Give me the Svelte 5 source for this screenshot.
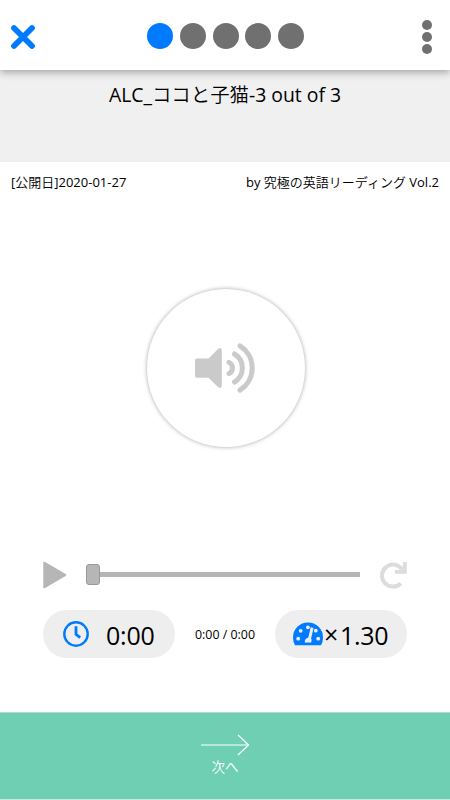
<script lang="ts">
  let steps = 5;
  let current = 0;
  let title = 'ALC_ココと子猫-3 out of 3';
  let published = '2020-01-27';
  let author = '究極の英語リーディング Vol.2';
  let elapsed = '0:00';
  let total = '0:00';
  let rate = '1.30';
</script>

<div class="screen">
  <header class="topbar">
    <button class="close" aria-label="close">
      <svg width="26" height="26" viewBox="0 0 26 26">
        <path d="M4 4 L22 22 M22 4 L4 22" stroke="#007bff" stroke-width="5.8" stroke-linecap="round" />
      </svg>
    </button>
    <div class="steps">
      {#each Array(steps) as _, i}
        <span class="step" class:active={i === current}></span>
      {/each}
    </div>
    <button class="menu" aria-label="menu">
      <span></span><span></span><span></span>
    </button>
  </header>

  <div class="title-band">
    <h1>{title}</h1>
  </div>

  <div class="meta">
    <span class="date">[公開日]{published}</span>
    <span class="author">by {author}</span>
  </div>

  <main>
    <button class="speaker" aria-label="play sound">
      <svg width="60" height="50" viewBox="0 0 60 50">
        <path d="M2 15.5 H13.5 L23 6 Q26.8 3.5 26.8 7.5 V42.5 Q26.8 46.5 23 44 L13.5 34.8 H2 Q0 34.8 0 32.8 V17.5 Q0 15.5 2 15.5 Z" fill="#cacaca" />
        <g fill="none" stroke="#cacaca" stroke-width="5" stroke-linecap="round">
          <path d="M34 19.4 A6.3 6.3 0 0 1 34 30.6" />
          <path d="M39.5 11 A16.4 16.4 0 0 1 39.5 39" />
          <path d="M45 2.8 A26.3 26.3 0 0 1 45 47.2" />
        </g>
      </svg>
    </button>
  </main>

  <div class="player">
    <svg class="play" width="24" height="28" viewBox="0 0 24 28">
      <path d="M1.5 2 L22 14 L1.5 26 Z" fill="#b6b6b6" stroke="#b6b6b6" stroke-width="2.5" stroke-linejoin="round" />
    </svg>
    <div class="slider">
      <span class="thumb"></span>
      <span class="track"></span>
    </div>
    <svg class="repeat" width="28" height="28" viewBox="0 0 28 28">
      <path d="M22.2 8.6 A11 11 0 1 0 20.8 22.3" fill="none" stroke="#dcdcdc" stroke-width="4" />
      <path d="M15 12.8 V9 H22.9 V1 H26.8 V12.8 Z" fill="#dcdcdc" />
    </svg>
  </div>

  <div class="controls">
    <div class="pill timer">
      <svg width="28" height="28" viewBox="0 0 28 28" fill="none" stroke="#007bff">
        <circle cx="14" cy="14" r="11.7" stroke-width="2.4" />
        <path d="M14 6.2 V14.3 L18.2 17.7" stroke-width="2.8" />
      </svg>
      <span class="value">{elapsed}</span>
    </div>
    <span class="progress">{elapsed} / {total}</span>
    <div class="pill speed">
      <svg width="30" height="24" viewBox="0 0 30 24">
        <path d="M2 23.3 Q0 20 0 15.4 A15 15 0 0 1 30 15.4 Q30 20 28 23.3 Z" fill="#007bff" />
        <g fill="#eee">
          <circle cx="5.2" cy="16.7" r="1.9" />
          <circle cx="7.7" cy="8.8" r="1.9" />
          <circle cx="14.9" cy="5.3" r="1.9" />
          <circle cx="22.8" cy="8.7" r="1.9" />
          <circle cx="25.2" cy="16.7" r="1.9" />
          <path d="M17.7 5.2 L20.6 6 L18.1 16.2 Q19.3 18.2 18.2 20.5 H11.8 Q11.5 16.4 15.3 15.4 Z" />
        </g>
      </svg>
      <span class="times">×</span><span class="value rate">{rate}</span>
    </div>
  </div>

  <button class="next">
    <svg width="50" height="22" viewBox="0 0 50 22" fill="none" stroke="#fff" stroke-width="1.2">
      <path d="M1 11 H48.5 M38 1 L48.5 11 L38 21" />
    </svg>
    <span>次へ</span>
  </button>
</div>

<style>
:global(body) {
  margin: 0;
  background: #fff;
}
.screen {
  display: flex;
  flex-direction: column;
  width: 450px;
  height: 800px;
  overflow: hidden;
  font-family: "Open Sans", "Noto Sans CJK JP DemiLight", "Noto Sans CJK JP", sans-serif;
  color: #000;
}
.screen * {
  box-sizing: border-box;
}
svg {
  display: block;
  flex: none;
}
button {
  padding: 0;
  border: 0;
  background: none;
  font: inherit;
}
.topbar {
  display: flex;
  justify-content: space-between;
  height: 70px;
  flex: none;
  padding: 0 18px 0 10px;
  box-shadow: 0 2px 8px rgba(0, 0, 0, 0.35);
  z-index: 1;
}
.close {
  height: 26px;
  margin-top: 24px;
}
.steps {
  display: flex;
  gap: 6.8px;
  margin: 23px 0 0 -7px;
}
.step {
  width: 26px;
  height: 26px;
  border-radius: 50%;
  background: #707070;
}
.step.active {
  background: #007bff;
}
.menu {
  display: flex;
  flex-direction: column;
  gap: 2px;
  margin-top: 20px;
}
.menu span {
  width: 10px;
  height: 10px;
  border-radius: 50%;
  background: #707070;
}
.title-band {
  height: 92px;
  flex: none;
  padding-top: 11px;
  background: #f0f0f0;
}
h1 {
  margin: 0;
  font-size: 19.4px;
  font-weight: 400;
  line-height: 28px;
  text-align: center;
  white-space: nowrap;
}
.meta {
  display: flex;
  justify-content: space-between;
  height: 40px;
  padding: 0 11px;
  font-size: 13px;
  line-height: 40px;
  white-space: nowrap;
}
main {
  display: flex;
  justify-content: center;
  height: 358px;
  padding: 87px 0 0 1px;
}
.speaker {
  display: flex;
  align-items: center;
  justify-content: center;
  width: 158px;
  height: 158px;
  padding-right: 2px;
  border-radius: 50%;
  background: #fff;
  box-shadow: 0 0 4px rgba(0, 0, 0, 0.35);
}
.player {
  display: flex;
  align-items: center;
  height: 28px;
  padding: 0 42px 0 43px;
}
.play,
.repeat {
  margin-top: 2px;
}
.slider {
  display: flex;
  align-items: center;
  width: 274px;
  margin: 0 20px 0 19px;
}
.thumb {
  width: 14px;
  height: 21px;
  border: 1px solid #999;
  border-radius: 3px;
  background: #b6b6b6;
}
.track {
  flex: 1;
  height: 5px;
  background: #b6b6b6;
}
.controls {
  display: flex;
  align-items: center;
  justify-content: space-between;
  height: 48px;
  margin: 22px 43px 0;
}
.pill {
  display: flex;
  align-items: center;
  width: 132px;
  height: 48px;
  border-radius: 24px;
  background: #eee;
}
.timer {
  padding-left: 19px;
}
.speed {
  padding-left: 18px;
}
.value {
  font-size: 25px;
  line-height: 48px;
  padding-top: 2px;
}
.timer .value {
  margin-left: 16px;
  letter-spacing: -0.2px;
}
.times {
  width: 17px;
  padding-left: 1px;
  font-size: 25px;
}
.rate {
  letter-spacing: -0.3px;
}
.progress {
  font-size: 12.4px;
}
.next {
  display: flex;
  flex-direction: column;
  align-items: center;
  height: 88px;
  margin-top: auto;
  padding-top: 21px;
  border-top: 1px solid #b5d8cb;
  border-bottom: 1px solid #c5e9dc;
  background: #6ecfb2;
  color: #fff;
}
.next span {
  margin-top: 1px;
  font-size: 13.5px;
  line-height: 20px;
}
</style>
